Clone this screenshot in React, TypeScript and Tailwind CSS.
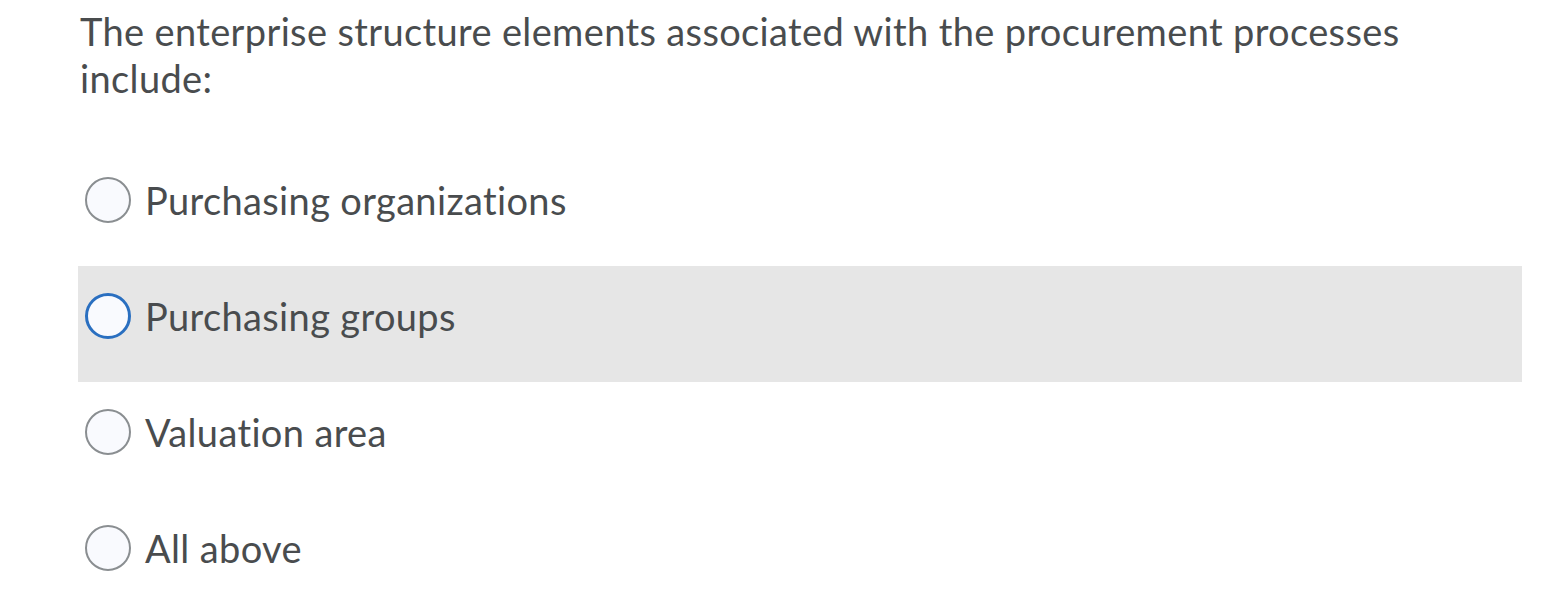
const options = [
  { label: 'Purchasing organizations', focused: false },
  { label: 'Purchasing groups', focused: true },
  { label: 'Valuation area', focused: false },
  { label: 'All above', focused: false },
];

function Radio({ focused }: { focused: boolean }) {
  return (
    <span
      className={
        focused
          ? 'h-[46px] w-[46px] shrink-0 rounded-full border-[3px] border-[#2a6fc0] bg-[#f9fafe]'
          : 'h-[46px] w-[46px] shrink-0 rounded-full border-2 border-[#8a8e91] bg-[#f9fafe]'
      }
    />
  );
}

export default function App() {
  return (
    <div className="min-h-[592px] bg-white font-['Lato',sans-serif] text-[#494c4e] tracking-[0.36px] [font-variant-ligatures:none]">
      <div className="ml-[78px] w-[1444px]">
        <p className="pl-[2px] pt-[8px] text-[38px] leading-[47px]">
          The enterprise structure elements associated with the procurement processes
          <br />
          include:
        </p>
        <div className="mt-[48px] flex flex-col">
          {options.map((o) => (
            <label
              key={o.label}
              className={
                o.focused
                  ? 'flex h-[116px] items-center gap-[14px] bg-[#e6e6e6] pb-[16px] pl-[7px]'
                  : 'flex h-[116px] items-center gap-[14px] pb-[16px] pl-[7px]'
              }
            >
              <Radio focused={o.focused} />
              <span className="text-[38px] leading-[46px]">{o.label}</span>
            </label>
          ))}
        </div>
      </div>
    </div>
  );
}
